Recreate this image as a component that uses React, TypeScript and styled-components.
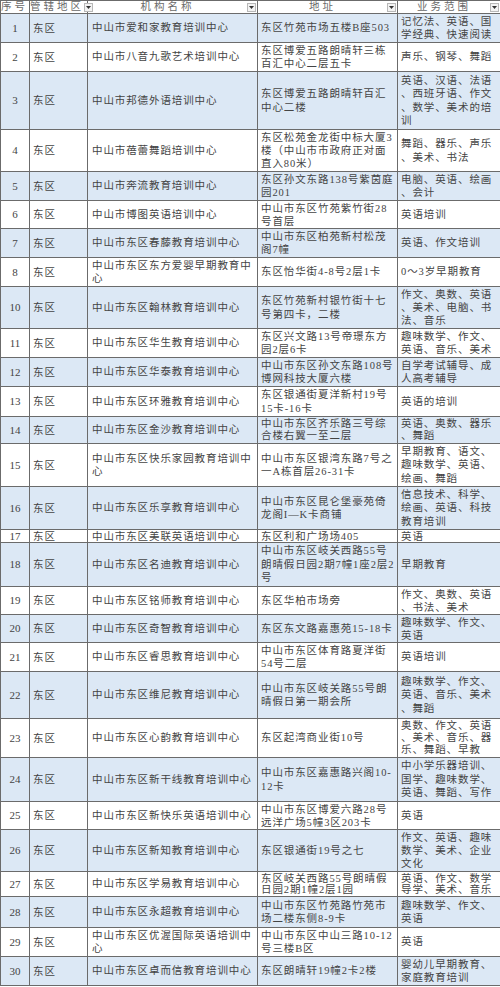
import styled, { createGlobalStyle } from "styled-components";

// 페이지 기본 스타일
const GlobalStyle = createGlobalStyle`
    body {
        margin: 0;
        background: #fff;
        font-family: "Liberation Serif", "Noto Sans CJK SC", serif;
    }
`;

// 표 전체
const Table = styled.table`
    width: 500px;
    border-collapse: collapse;
    table-layout: fixed;
`;

const Col = styled.col<{ $w: number }>`
    width: ${(p) => p.$w}px;
`;

// 헤더 셀
const Th = styled.th`
    height: 12px;
    padding: 0 1px 0 0;
    border: 1px solid #6b6b6b;
    background: #fff;
    font-weight: normal;
    font-size: 10.5px;
    line-height: 12px;
    color: #6a6a6a;
    letter-spacing: 3px;
`;

const HeadInner = styled.div`
    display: flex;
    align-items: center;
`;

const Label = styled.span`
    flex: 1;
    text-align: center;
    white-space: nowrap;
`;

// 필터 드롭다운 버튼
const FilterButton = styled.span`
    flex-shrink: 0;
    width: 7px;
    height: 7px;
    border: 1px solid #b8b8b8;
    background: #f3f3f3;
    display: flex;
    align-items: center;
    justify-content: center;
`;

// 데이터 행
const Row = styled.tr<{ $h: number; $alt: boolean }>`
    height: ${(p) => p.$h}px;
    background: ${(p) => (p.$alt ? "#dce8f5" : "#fff")};
`;

const Cell = styled.td<{ $center?: boolean; $pad?: number; $lh?: number }>`
    border: 1px solid #6b6b6b;
    padding: 0 0 0 ${(p) => p.$pad ?? 3}px;
    vertical-align: middle;
    text-align: ${(p) => (p.$center ? "center" : "left")};
    font-size: ${(p) => (p.$center ? "11px" : "10.5px")};
    line-height: ${(p) => p.$lh ?? 13}px;
    letter-spacing: ${(p) => (p.$center ? "0" : "0.9px")};
    color: #444;
    white-space: nowrap;
    overflow: hidden;
`;

const Line = styled.div``;

type Item = { n: string; h: number; name: string[]; addr: string[]; scope: string[] };

const rows: Item[] = [
    { n: "1", h: 29, name: ["中山市爱和家教育培训中心"], addr: ["东区竹苑市场五楼B座503"], scope: ["记忆法、英语、国", "学经典、快速阅读"] },
    { n: "2", h: 29, name: ["中山市八音九歌艺术培训中心"], addr: ["东区博爱五路朗晴轩三栋", "百汇中心二层五卡"], scope: ["声乐、钢琴、舞蹈"] },
    { n: "3", h: 58, name: ["中山市邦德外语培训中心"], addr: ["东区博爱五路朗晴轩百汇", "中心二楼"], scope: ["英语、汉语、法语", "、西班牙语、作文", "、数学、美术的培", "训"] },
    { n: "4", h: 42, name: ["中山市蓓蕾舞蹈培训中心"], addr: ["东区松苑金龙街中标大厦3", "楼（中山市市政府正对面", "直入80米）"], scope: ["舞蹈、器乐、声乐", "、美术、书法"] },
    { n: "5", h: 29, name: ["中山市奔流教育培训中心"], addr: ["东区孙文东路138号紫茵庭", "园201"], scope: ["电脑、英语、绘画", "、会计"] },
    { n: "6", h: 28, name: ["中山市博图英语培训中心"], addr: ["中山市东区竹苑紫竹街28", "号首层"], scope: ["英语培训"] },
    { n: "7", h: 29, name: ["中山市东区春藤教育培训中心"], addr: ["中山市东区柏苑新村松茂", "阁7幢"], scope: ["英语、作文培训"] },
    { n: "8", h: 29, name: ["中山市东区东方爱婴早期教育中", "心"], addr: ["东区怡华街4-8号2层1卡"], scope: ["0～3岁早期教育"] },
    { n: "10", h: 42, name: ["中山市东区翰林教育培训中心"], addr: ["东区竹苑新村银竹街十七", "号第四卡，二楼"], scope: ["作文、奥数、英语", "、美术、电脑、书", "法、音乐"] },
    { n: "11", h: 29, name: ["中山市东区华生教育培训中心"], addr: ["东区兴文路13号帝璟东方", "园2层6卡"], scope: ["趣味数学、作文、", "英语、音乐、美术"] },
    { n: "12", h: 29, name: ["中山市东区华泰教育培训中心"], addr: ["中山市东区孙文东路108号", "博网科技大厦六楼"], scope: ["自学考试辅导、成", "人高考辅导"] },
    { n: "13", h: 30, name: ["中山市东区环雅教育培训中心"], addr: ["东区银通街夏洋新村19号", "15卡-16卡"], scope: ["英语的培训"] },
    { n: "14", h: 27, name: ["中山市东区金沙教育培训中心"], addr: ["中山市东区齐乐路三号综", "合楼右翼一至二层"], scope: ["英语、奥数、器乐", "、舞蹈"] },
    { n: "15", h: 43, name: ["中山市东区快乐家园教育培训中", "心"], addr: ["中山市东区银湾东路7号之", "一A栋首层26-31卡"], scope: ["早期教育、语文、", "趣味数学、英语、", "绘画、舞蹈"] },
    { n: "16", h: 43, name: ["中山市东区乐享教育培训中心"], addr: ["中山市东区昆仑堡豪苑倚", "龙阁I—K卡商铺"], scope: ["信息技术、科学、", "绘画、英语、科技", "教育培训"] },
    { n: "17", h: 13, name: ["中山市东区美联英语培训中心"], addr: ["东区利和广场场405"], scope: ["英语"] },
    { n: "18", h: 44, name: ["中山市东区名迪教育培训中心"], addr: ["中山市东区岐关西路55号", "朗晴假日园2期7幢1座2层2", "号"], scope: ["早期教育"] },
    { n: "19", h: 28, name: ["中山市东区铭师教育培训中心"], addr: ["东区华柏市场旁"], scope: ["作文、奥数、英语", "、书法、美术"] },
    { n: "20", h: 28, name: ["中山市东区奇智教育培训中心"], addr: ["东区东文路嘉惠苑15-18卡"], scope: ["趣味数学、作文、", "英语"] },
    { n: "21", h: 29, name: ["中山市东区睿思教育培训中心"], addr: ["中山市东区体育路夏洋街", "54号二层"], scope: ["英语培训"] },
    { n: "22", h: 47, name: ["中山市东区维尼教育培训中心"], addr: ["中山市东区岐关路55号朗", "晴假日第一期会所"], scope: ["趣味数学、作文、", "英语、音乐、美术", "、舞蹈"] },
    { n: "23", h: 39, name: ["中山市东区心韵教育培训中心"], addr: ["东区起湾商业街10号"], scope: ["奥数、作文、英语", "、美术、音乐、器", "乐、舞蹈、早教"] },
    { n: "24", h: 44, name: ["中山市东区新干线教育培训中心"], addr: ["中山市东区嘉惠路兴阁10-", "12卡"], scope: ["中小学乐器培训、", "国学、趣味数学、", "英语、舞蹈、写作"] },
    { n: "25", h: 28, name: ["中山市东区新快乐英语培训中心"], addr: ["中山市东区博爱六路28号", "远洋广场5幢3区203卡"], scope: ["英语"] },
    { n: "26", h: 42, name: ["中山市东区新知教育培训中心"], addr: ["东区银通街19号之七"], scope: ["作文、英语、趣味", "数学、美术、企业", "文化"] },
    { n: "27", h: 25, name: ["中山市东区学易教育培训中心"], addr: ["东区岐关西路55号朗晴假", "日园2期1幢2层1园"], scope: ["英语、作文、数学", "导学、美术、音乐"] },
    { n: "28", h: 31, name: ["中山市东区永超教育培训中心"], addr: ["中山市东区竹苑路竹苑市", "场二楼东侧8-9卡"], scope: ["趣味数学、作文、", "英语"] },
    { n: "29", h: 29, name: ["中山市东区优渥国际英语培训中", "心"], addr: ["中山市东区中山三路10-12", "号三楼B区"], scope: ["英语"] },
    { n: "30", h: 29, name: ["中山市东区卓而信教育培训中心"], addr: ["东区朗晴轩19幢2卡2楼"], scope: ["婴幼儿早期教育、", "家庭教育培训"] },
];

const Arrow = () => (
    <svg width="5" height="3" viewBox="0 0 5 3">
        <path d="M0 0 L5 0 L2.5 3 Z" fill="#333" />
    </svg>
);

const Head = ({ text, filter = true }: { text: string; filter?: boolean }) => (
    <Th>
        <HeadInner>
            <Label>{text}</Label>
            {filter && (
                <FilterButton>
                    <Arrow />
                </FilterButton>
            )}
        </HeadInner>
    </Th>
);

const Lines = ({ list }: { list: string[] }) => (
    <>
        {list.map((t, i) => (
            <Line key={i}>{t}</Line>
        ))}
    </>
);

export default function App() {
    return (
        <>
            <GlobalStyle />
            <Table>
                <colgroup>
                    <Col $w={29} />
                    <Col $w={58} />
                    <Col $w={170} />
                    <Col $w={140} />
                    <Col $w={103} />
                </colgroup>
                <thead>
                    <tr>
                        <Head text="序号" filter={false} />
                        <Head text="管辖地区" />
                        <Head text="机构名称" />
                        <Head text="地址" />
                        <Head text="业务范围" />
                    </tr>
                </thead>
                <tbody>
                    {rows.map((r, i) => {
                        // 행 높이에 맞춰 줄 간격 계산
                        const lines = Math.max(r.name.length, r.addr.length, r.scope.length);
                        const lh = Math.min(13.5, (r.h - 2) / lines);
                        return (
                            <Row key={r.n} $h={r.h} $alt={i % 2 === 0}>
                                <Cell $center $pad={0} $lh={Math.min(13, r.h - 2)}>{r.n}</Cell>
                                <Cell $lh={Math.min(13, r.h - 2)}>东区</Cell>
                                <Cell $pad={4} $lh={lh}>
                                    <Lines list={r.name} />
                                </Cell>
                                <Cell $lh={lh}>
                                    <Lines list={r.addr} />
                                </Cell>
                                <Cell $lh={lh}>
                                    <Lines list={r.scope} />
                                </Cell>
                            </Row>
                        );
                    })}
                </tbody>
            </Table>
        </>
    );
}
